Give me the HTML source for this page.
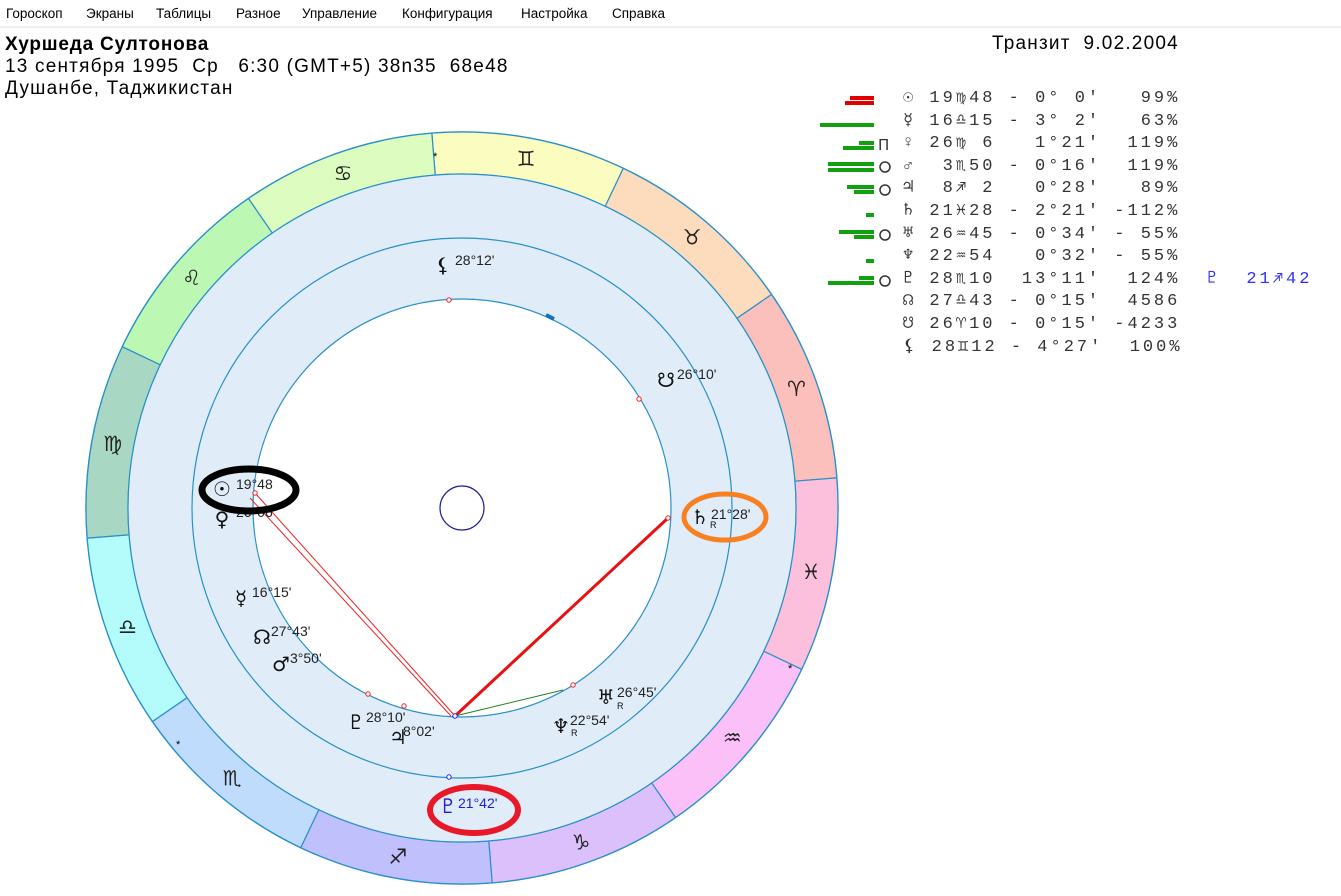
<!DOCTYPE html>
<html><head><meta charset="utf-8"><style>
body{margin:0;width:1341px;height:896px;background:#fff;overflow:hidden;font-family:"Liberation Sans","DejaVu Sans",sans-serif;position:relative}
.menu{position:absolute;top:0;left:0;width:1341px;height:26px;border-bottom:2px solid #f0f0f0;font-size:13.5px;color:#000}
.menu span{position:absolute;top:6px}
.t{position:absolute;white-space:nowrap;color:#000;font-size:19px;letter-spacing:1.2px}
.tb{position:absolute;left:903px;top:88px;font-family:"Liberation Mono","DejaVu Sans Mono",monospace;font-size:17px;color:#333;line-height:22.6px;white-space:pre;letter-spacing:3px}
svg{position:absolute;left:0;top:0}
</style></head><body>
<div class="menu"><span style="left:6px">Гороскоп</span><span style="left:86px">Экраны</span><span style="left:156px">Таблицы</span><span style="left:236px">Разное</span><span style="left:302px">Управление</span><span style="left:402px">Конфигурация</span><span style="left:521px">Настройка</span><span style="left:612px">Справка</span></div>
<div class="t" style="left:5px;top:34px;font-weight:bold;letter-spacing:0.8px">Хуршеда Султонова</div>
<div class="t" style="left:5px;top:56px">13 сентября 1995&nbsp; Ср&nbsp;&nbsp; 6:30 (GMT+5) 38n35&nbsp; 68e48</div>
<div class="t" style="left:5px;top:78px">Душанбе, Таджикистан</div>
<div class="t" style="left:992px;top:33px">Транзит&nbsp; 9.02.2004</div>
<div class="tb">☉ 19♍48 - 0° 0'   99%
☿ 16♎15 - 3° 2'   63%
♀ 26♍ 6   1°21'  119%
♂  3♏50 - 0°16'  119%
♃  8♐ 2   0°28'   89%
♄ 21♓28 - 2°21' -112%
♅ 26♒45 - 0°34' - 55%
♆ 22♒54   0°32' - 55%
♇ 28♏10  13°11'  124%  <span style="color:#3030ff">♇  21♐42</span>
☊ 27♎43 - 0°15'  4586
☋ 26♈10 - 0°15' -4233
⚸ 28♊12 - 4°27'  100%</div>
<svg width="1341" height="896" viewBox="0 0 1341 896">
<g fill="#e00000"><rect x="850" y="96" width="24" height="4"/><rect x="845" y="101" width="29" height="4"/></g>
<g fill="#10a010">
<rect x="820" y="123" width="54" height="4"/>
<rect x="859" y="141" width="15" height="4"/><rect x="843" y="146" width="31" height="4"/>
<rect x="828" y="162" width="46" height="4"/><rect x="828" y="168" width="46" height="4"/>
<rect x="847" y="185" width="27" height="4"/><rect x="854" y="190" width="20" height="4"/>
<rect x="866" y="213" width="8" height="4"/>
<rect x="839" y="230" width="35" height="4"/><rect x="854" y="235" width="20" height="4"/>
<rect x="866" y="259" width="8" height="4"/>
<rect x="859" y="276" width="15" height="4"/><rect x="828" y="281" width="46" height="4"/>
</g>
<g fill="none" stroke="#333" stroke-width="1.5"><circle cx="885" cy="167" r="5"/><circle cx="885" cy="190" r="5"/><circle cx="885" cy="235" r="5"/><circle cx="885" cy="281" r="5"/></g>
<text x="878" y="150" font-size="15" fill="#333" font-family="DejaVu Sans">Π</text>
<g id="wheel"></g>
</svg>
<script>
const NS="http://www.w3.org/2000/svg",g=document.getElementById('wheel');
const cx=462,cy=508,R1=376,R2=334,R3=270,R4=209;
function el(n,a,t){const e=document.createElementNS(NS,n);for(const k in a)e.setAttribute(k,a[k]);if(t)e.textContent=t;g.appendChild(e);return e;}
function pt(r,th){const a=th*Math.PI/180;return [cx+r*Math.sin(a),cy-r*Math.cos(a)];}
const cols=["#fafcc0","#fcdcbc","#fcc0bc","#fcc0dc","#fcc0f8","#dcc0fc","#c0c0fc","#c0dcfc","#b4fcfc","#a8d8c4","#bcf8b4","#dcfcc0"];
const gl=["♊","♉","♈","♓","♒","♑","♐","♏","♎","♍","♌","♋"];
el('circle',{cx,cy,r:R1,fill:'#fff',stroke:'#2890c8','stroke-width':1.5});
for(let k=0;k<12;k++){const a0=-4.6+30*k,a1=a0+30;const p0=pt(R1,a0),p1=pt(R1,a1),q1=pt(R2,a1),q0=pt(R2,a0);
el('path',{d:`M${p0}A${R1},${R1} 0 0 1 ${p1}L${q1}A${R2},${R2} 0 0 0 ${q0}Z`,fill:cols[k],stroke:'#2890c8','stroke-width':1.2});
const c=pt(355,a0+15);el('text',{x:c[0],y:c[1]+7,'text-anchor':'middle','font-size':21,fill:'#222','font-family':'DejaVu Sans'},gl[k]);}
el('circle',{cx,cy,r:R2,fill:'#e0ecf8',stroke:'#2890c8','stroke-width':1.2});
el('circle',{cx,cy,r:R3,fill:'none',stroke:'#2890c8','stroke-width':1.2});
el('circle',{cx,cy,r:R4,fill:'#fff',stroke:'#2890c8','stroke-width':1.2});
el('circle',{cx,cy,r:22,fill:'none',stroke:'#2020a0','stroke-width':1.2});
[[433,160],[788,672],[176,748]].forEach(p=>el('text',{x:p[0],y:p[1],'font-size':11,fill:'#000'},'*'));
el('line',{x1:255,y1:493,x2:455,y2:716,stroke:'#f02020','stroke-width':1});
el('line',{x1:250,y1:498,x2:451,y2:716,stroke:'#f02020','stroke-width':1});
el('line',{x1:668,y1:518,x2:455,y2:716,stroke:'#e81010','stroke-width':3});
el('line',{x1:455,y1:716,x2:563,y2:690,stroke:'#208020','stroke-width':1});
[[449,300],[639,399],[368,694],[404,706],[573,685],[255,493],[668,518]].forEach(p=>el('circle',{cx:p[0],cy:p[1],r:2.2,fill:'#fff',stroke:'#f02020','stroke-width':1}));
[[455,716],[449,777]].forEach(p=>el('circle',{cx:p[0],cy:p[1],r:2.2,fill:'#fff',stroke:'#2020f0','stroke-width':1}));
el('line',{x1:546,y1:315,x2:554,y2:319,stroke:'#1070c0','stroke-width':4});
const L=[["⚸",443,272,"28°12'",455,265],["☋",666,387,"26°10'",677,379],["☉",222,496,"19°48",236,489],["♀",222,526,"26°06'",236,517],["♄",700,524,"21°28'",711,519],["☿",241,605,"16°15'",252,597],["☊",262,644,"27°43'",271,636],["♂",281,671,"3°50'",290,663],["♅",606,704,"26°45'",617,697],["♇",356,729,"28°10'",366,722],["♆",561,733,"22°54'",570,725],["♃",398,744,"8°02'",403,736]];
L.forEach(a=>{el('text',{x:a[1],y:a[2],'text-anchor':'middle','font-size':20,fill:'#111','font-family':'DejaVu Sans'},a[0]);el('text',{x:a[4],y:a[5],'font-size':14,fill:'#222','font-family':'Liberation Sans'},a[3]);});
[[710,528],[617,709],[571,736]].forEach(p=>el('text',{x:p[0],y:p[1],'font-size':9,fill:'#111'},'R'));
el('text',{x:448,y:813,'text-anchor':'middle','font-size':20,fill:'#2020d0','font-family':'DejaVu Sans'},'♇');
el('text',{x:458,y:808,'font-size':14,fill:'#2020d0'},"21°42'");
el('ellipse',{cx:249,cy:490,rx:47,ry:21,fill:'none',stroke:'#000','stroke-width':7});
el('ellipse',{cx:725,cy:517,rx:41,ry:23,fill:'none',stroke:'#f88020','stroke-width':5});
el('ellipse',{cx:474,cy:810,rx:44,ry:23,fill:'none',stroke:'#e81828','stroke-width':6});
</script>
</body></html>
